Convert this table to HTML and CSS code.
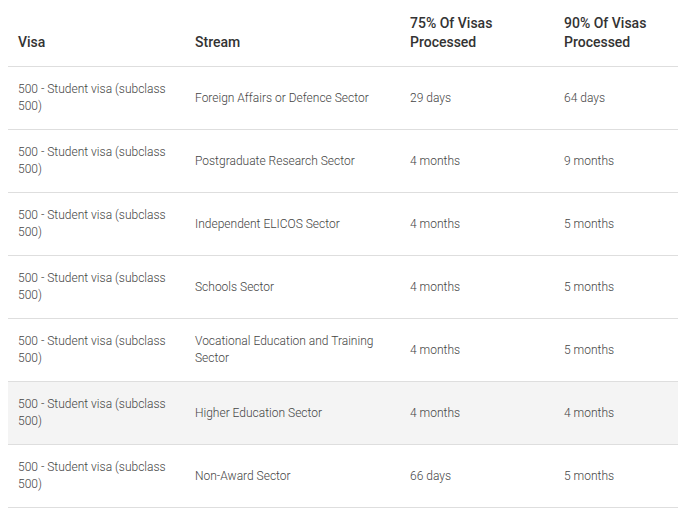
FILE: index.html
```html
<!DOCTYPE html>
<html>
<head>
<meta charset="utf-8">
<link rel="stylesheet" href="styles.css">
</head>
<body>
<table class="visa-table">
  <colgroup>
    <col class="c1"><col class="c2"><col class="c3"><col class="c4">
  </colgroup>
  <thead>
    <tr>
      <th>Visa</th>
      <th>Stream</th>
      <th>75% Of Visas Processed</th>
      <th>90% Of Visas Processed</th>
    </tr>
  </thead>
  <tbody>
    <tr><td>500 - Student visa (subclass 500)</td><td>Foreign Affairs or Defence Sector</td><td>29 days</td><td>64 days</td></tr>
    <tr><td>500 - Student visa (subclass 500)</td><td>Postgraduate Research Sector</td><td>4 months</td><td>9 months</td></tr>
    <tr><td>500 - Student visa (subclass 500)</td><td>Independent ELICOS Sector</td><td>4 months</td><td>5 months</td></tr>
    <tr><td>500 - Student visa (subclass 500)</td><td>Schools Sector</td><td>4 months</td><td>5 months</td></tr>
    <tr><td>500 - Student visa (subclass 500)</td><td>Vocational Education and Training Sector</td><td>4 months</td><td>5 months</td></tr>
    <tr class="hover"><td>500 - Student visa (subclass 500)</td><td>Higher Education Sector</td><td>4 months</td><td>4 months</td></tr>
    <tr><td>500 - Student visa (subclass 500)</td><td>Non-Award Sector</td><td>66 days</td><td>5 months</td></tr>
  </tbody>
</table>
</body>
</html>
```
FILE: styles.css
```css
html, body {
  margin: 0;
  padding: 0;
  background: #fff;
  overflow: hidden;
}
body {
  padding-left: 8px;
  font-family: Roboto, "Liberation Sans", sans-serif;
}
.visa-table {
  width: 670px;
  border-collapse: collapse;
  table-layout: fixed;
}
.c1 { width: 177px; }
.c2 { width: 215px; }
.c3 { width: 154px; }
.c4 { width: 124px; }
.visa-table th {
  text-align: left;
  vertical-align: bottom;
  font-size: 14px;
  font-weight: 500;
  line-height: 19px;
  color: #333;
  padding: 14px 10px 14px 10px;
  border-bottom: 1px solid #dedede;
}
.visa-table td {
  font-size: 12px;
  font-weight: 300;
  line-height: 17px;
  color: #444;
  padding: 0 10px;
  height: 62px;
  vertical-align: middle;
  border-bottom: 1px solid #dedede;
}
.visa-table tr.hover td {
  background: #f4f4f4;
}
```
